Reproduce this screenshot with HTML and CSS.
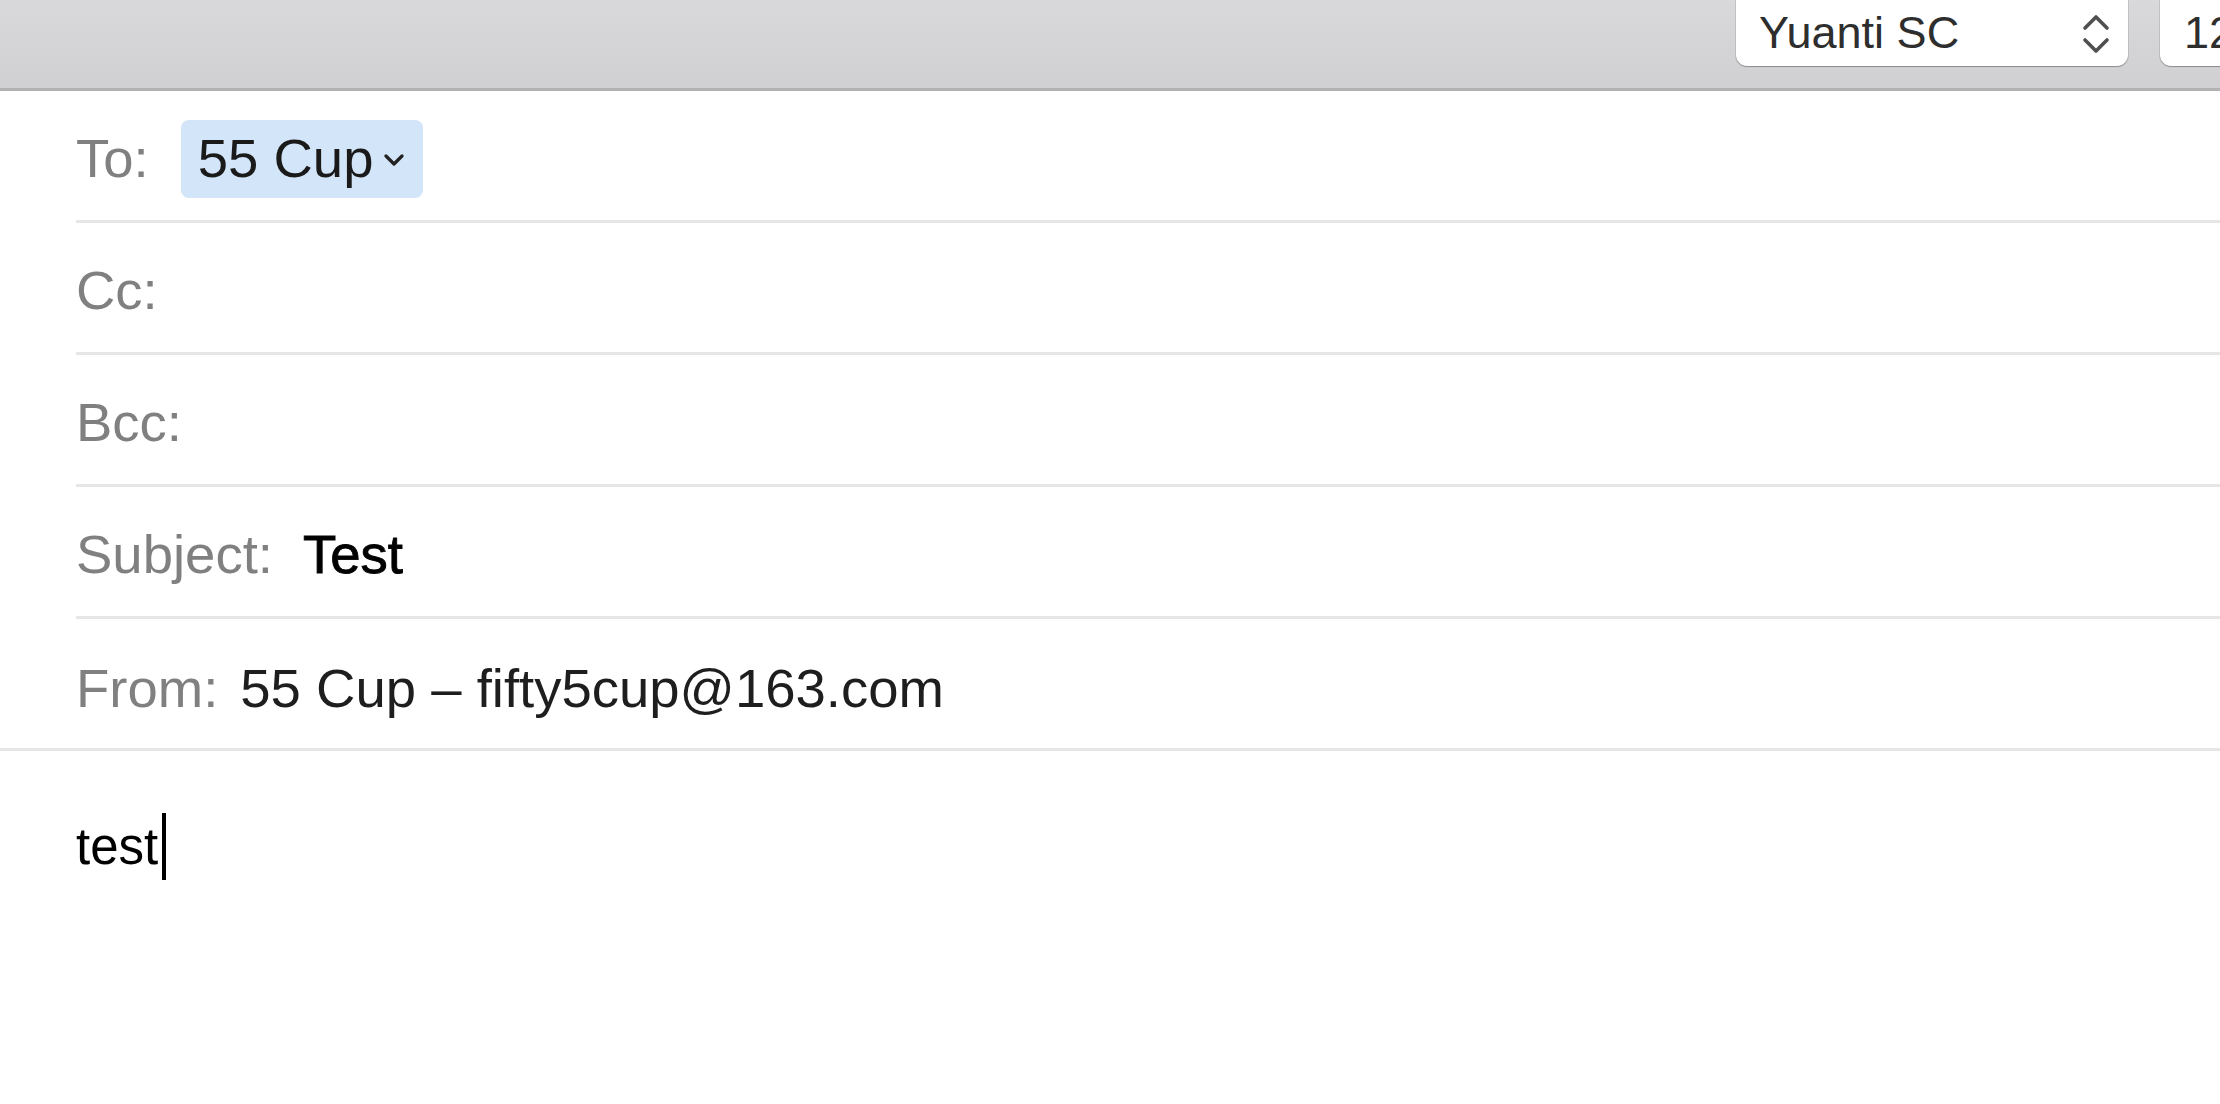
FILE: index.html
```html
<!DOCTYPE html>
<html>
<head>
<meta charset="utf-8">
<link rel="stylesheet" href="styles.css">
</head>
<body>
<div class="window">
  <header class="toolbar">
    <div class="popup font-popup">
      <span class="popup-label">Yuanti SC</span>
      <svg class="updown" width="28" height="40" viewBox="0 0 28 40">
        <polyline points="3,14 14,3 25,14" fill="none" stroke="#505050" stroke-width="3.6" stroke-linecap="round" stroke-linejoin="round"/>
        <polyline points="3,26 14,37 25,26" fill="none" stroke="#505050" stroke-width="3.6" stroke-linecap="round" stroke-linejoin="round"/>
      </svg>
    </div>
    <div class="popup size-popup">
      <span class="popup-label">12</span>
    </div>
  </header>

  <section class="fields">
    <div class="row">
      <span class="label">To:</span>
      <span class="chip">55 Cup<svg class="chip-chev" width="22" height="12" viewBox="0 0 22 12"><polyline points="3,2 11,10 19,2" fill="none" stroke="#222" stroke-width="3.2" stroke-linecap="round" stroke-linejoin="round"/></svg></span>
    </div>
    <div class="row">
      <span class="label">Cc:</span>
    </div>
    <div class="row">
      <span class="label">Bcc:</span>
    </div>
    <div class="row">
      <span class="label">Subject:</span>
      <span class="value subject">Test</span>
    </div>
    <div class="row last">
      <span class="label">From:</span>
      <span class="value">55 Cup – fifty5cup@163.com</span>
    </div>
  </section>

  <main class="message">
    <p class="body-text">test<span class="caret"></span></p>
  </main>
</div>
</body>
</html>
```

FILE: styles.css
```css
html, body {
  margin: 0;
  padding: 0;
  background: #ffffff;
  overflow: hidden;
}

body {
  font-family: "Liberation Sans", Arial, sans-serif;
  width: 2220px;
  height: 1104px;
}

.window {
  display: flex;
  flex-direction: column;
  height: 100%;
}

/* Toolbar */
.toolbar {
  height: 88px;
  border-bottom: 3px solid #b2b1b3;
  background: linear-gradient(#d9d8da, #d0cfd1);
  display: flex;
  justify-content: flex-end;
  align-items: flex-start;
  gap: 32px;
  overflow: hidden;
}

.popup {
  box-sizing: border-box;
  height: 66px;
  background: #ffffff;
  border-radius: 0 0 11px 11px;
  box-shadow: 0 1px 1px rgba(0, 0, 0, 0.28), 0 0 0 1px rgba(0, 0, 0, 0.08);
  display: flex;
  align-items: center;
  font-size: 45px;
  line-height: 66px;
  color: #2e2e2e;
}

.font-popup {
  width: 392px;
  padding: 0 18px 0 23px;
  justify-content: space-between;
}

.updown {
  display: block;
  margin-top: 2px;
}

.size-popup {
  width: 110px;
  margin-right: -50px;
  padding-left: 24px;
}

/* Header fields */
.fields {
  padding-left: 76px;
  border-bottom: 3px solid #e6e6e6;
}

.row {
  box-sizing: border-box;
  height: 132px;
  padding-top: 6px;
  border-bottom: 3px solid #e6e6e6;
  display: flex;
  align-items: center;
  gap: 25px;
  font-size: 54.5px;
}

.row.last {
  height: 129px;
  padding-top: 10px;
  border-bottom: none;
  gap: 22px;
}

.label {
  color: #808080;
}

.value {
  color: #1e1e1e;
}

.value.subject {
  color: #000000;
  margin-left: 5px;
  -webkit-text-stroke: 0.9px #000000;
}

.chip {
  display: inline-flex;
  align-items: center;
  margin-left: 7px;
  background: #d3e5f8;
  border-radius: 8px;
  padding: 7px 18px 8px 17px;
  color: #1a1a1a;
}

.chip-chev {
  display: block;
  margin-left: 10px;
  margin-top: 4px;
}

/* Message body */
.message {
  flex: 1;
  padding: 0 76px;
}

.body-text {
  margin: 0;
  padding-top: 62px;
  font-size: 51px;
  line-height: 60px;
  color: #000000;
}

.caret {
  display: inline-block;
  width: 4px;
  height: 67px;
  margin-left: 4px;
  background: #000000;
  vertical-align: -16px;
}
```
